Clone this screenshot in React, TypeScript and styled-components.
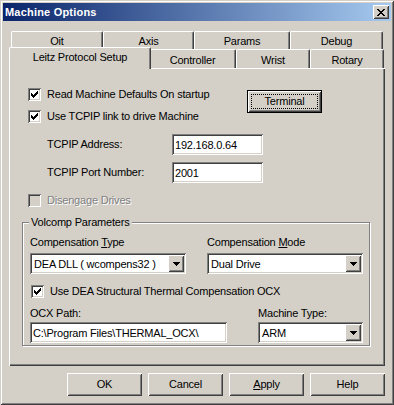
import React from 'react'
import styled, { createGlobalStyle } from 'styled-components'

const GlobalStyle = createGlobalStyle`
  html, body {
    margin: 0;
    padding: 0;
    background: #d4d0c8;
  }
  body {
    font-family: 'Liberation Sans', Arial, sans-serif;
    font-size: 11px;
    letter-spacing: -0.2px;
    color: #000;
  }
`

const raised = `
  box-shadow: inset 1px 1px #fff, inset -1px -1px #404040, inset 2px 2px #d4d0c8, inset -2px -2px #808080;
`

const sunken = `
  box-shadow: inset 1px 1px #808080, inset -1px -1px #fff, inset 2px 2px #404040, inset -2px -2px #d4d0c8;
`

const CHECK_PIXELS = [
  '......X',
  '.....XX',
  'X...XXX',
  'XX.XXX.',
  'XXXXX..',
  '.XXX...',
  '..X....',
]

const CLOSE_PIXELS = [
  'XX....XX',
  '.XX..XX.',
  '..XXXX..',
  '...XX...',
  '..XXXX..',
  '.XX..XX.',
  'XX....XX',
]

const PixelGlyph: React.FC<{ rows: string[], color?: string }> = ({ rows, color = '#000' }) => (
  <svg width={rows[0].length} height={rows.length} shapeRendering="crispEdges">
    {rows.map((row, y) =>
      row.split('').map((c, x) =>
        c === 'X' ? <rect key={`${x}-${y}`} x={x} y={y} width={1} height={1} fill={color} /> : null
      )
    )}
  </svg>
)

const Checkbox: React.FC<{ checked?: boolean, disabled?: boolean, label: React.ReactNode }> = ({
  checked,
  disabled,
  label,
}) => (
  <StyledCheckRow>
    <StyledCheckBox $disabled={disabled}>
      {checked && <PixelGlyph rows={CHECK_PIXELS} />}
    </StyledCheckBox>
    <StyledLabel $disabled={disabled}>{label}</StyledLabel>
  </StyledCheckRow>
)

const Combo: React.FC<{ value: string, width: number }> = ({ value, width }) => (
  <StyledCombo $width={width}>
    <StyledComboText>{value}</StyledComboText>
    <StyledDropButton>
      <svg width="7" height="4" shapeRendering="crispEdges">
        <path d="M0 0h7v1h-1v1h-1v1h-1v1h-1v-1h-1v-1h-1v-1h-1z" fill="#000" />
      </svg>
    </StyledDropButton>
  </StyledCombo>
)

const backTabs = [
  { label: 'Oit', width: 92 },
  { label: 'Axis', width: 91 },
  { label: 'Params', width: 96 },
  { label: 'Debug', width: 93 },
]

const frontTabs = [
  { label: 'Leitz Protocol Setup', width: 138, selected: true },
  { label: 'Controller', width: 87 },
  { label: 'Wrist', width: 74 },
  { label: 'Rotary', width: 74 },
]

const App: React.FC = () => {
  return (
    <>
      <GlobalStyle />
      <StyledWindow>
        <StyledTitleBar>
          <StyledTitle>Machine Options</StyledTitle>
          <StyledCloseButton>
            <PixelGlyph rows={CLOSE_PIXELS} />
          </StyledCloseButton>
        </StyledTitleBar>

        <StyledBody>
          <StyledTabStrip>
            <StyledTabRow $height={18}>
              {backTabs.map(t => (
                <StyledTab key={t.label} $width={t.width}>{t.label}</StyledTab>
              ))}
            </StyledTabRow>
            <StyledTabRow $height={19}>
              {frontTabs.map(t => (
                <StyledTab key={t.label} $width={t.width} $selected={t.selected}>{t.label}</StyledTab>
              ))}
            </StyledTabRow>
          </StyledTabStrip>

          <StyledPanel>
            <StyledTopGrid>
              <Checkbox checked label="Read Machine Defaults On startup" />
              <StyledTerminalButton>
                <StyledFocusRect>Terminal</StyledFocusRect>
              </StyledTerminalButton>
              <Checkbox checked label="Use TCPIP link to drive Machine" />
            </StyledTopGrid>

            <StyledFieldGrid>
              <StyledLabel>TCPIP Address:</StyledLabel>
              <StyledTextField>192.168.0.64</StyledTextField>
              <StyledLabel>TCPIP Port Number:</StyledLabel>
              <StyledTextField>2001</StyledTextField>
            </StyledFieldGrid>

            <StyledDisengage>
              <Checkbox disabled label="Disengage Drives" />
            </StyledDisengage>

            <StyledGroupBox>
              <StyledLegend>Volcomp Parameters</StyledLegend>
              <StyledCompGrid>
                <StyledLabel>Compensation <u>T</u>ype</StyledLabel>
                <StyledLabel>Compensation <u>M</u>ode</StyledLabel>
                <Combo value="DEA DLL ( wcompens32 )" width={156} />
                <Combo value="Dual Drive" width={156} />
              </StyledCompGrid>

              <StyledThermalRow>
                <Checkbox checked label="Use DEA Structural Thermal Compensation OCX" />
              </StyledThermalRow>

              <StyledOcxGrid>
                <StyledLabel>OCX Path:</StyledLabel>
                <StyledLabel>Machine Type:</StyledLabel>
                <StyledTextField>C:\Program Files\THERMAL_OCX\</StyledTextField>
                <Combo value="ARM" width={105} />
              </StyledOcxGrid>
            </StyledGroupBox>
          </StyledPanel>

          <StyledButtonBar>
            <StyledButton>OK</StyledButton>
            <StyledButton>Cancel</StyledButton>
            <StyledButton><u>A</u>pply</StyledButton>
            <StyledButton>Help</StyledButton>
          </StyledButtonBar>
        </StyledBody>
      </StyledWindow>
    </>
  )
}

const StyledWindow = styled.div`
  width: 394px;
  height: 405px;
  box-sizing: border-box;
  padding: 3px;
  background: #d4d0c8;
  box-shadow: inset 1px 1px #d4d0c8, inset -1px -1px #404040, inset 2px 2px #fff, inset -2px -2px #808080;
  display: flex;
  flex-direction: column;
`

const StyledTitleBar = styled.div`
  height: 18px;
  display: flex;
  align-items: center;
  padding: 0 2px;
  background: linear-gradient(to right, #0a246a, #a6caf0);
`

const StyledTitle = styled.div`
  color: #fff;
  font-weight: 700;
  font-size: 11px;
  line-height: 13px;
  letter-spacing: 0.2px;
`

const StyledCloseButton = styled.div`
  margin-left: auto;
  width: 16px;
  height: 14px;
  box-sizing: border-box;
  background: #d4d0c8;
  ${raised}
  display: flex;
  align-items: center;
  justify-content: center;
  padding-right: 1px;
`

const StyledBody = styled.div`
  padding: 10px 6px 0 6px;
  display: flex;
  flex-direction: column;
`

const StyledTabStrip = styled.div`
  display: flex;
  flex-direction: column;
`

const StyledTabRow = styled.div<{ $height: number }>`
  display: flex;
  align-items: flex-end;
  height: ${p => p.$height}px;
  padding-left: 2px;
`

const StyledTab = styled.div<{ $width: number, $selected?: boolean }>`
  box-sizing: border-box;
  width: ${p => p.$selected ? p.$width + 4 : p.$width}px;
  ${p => p.$selected ? 'height: 22px; margin: 0 -2px -1px -2px; padding-bottom: 3px;' : 'height: 100%; padding-top: 2px;'}
  position: relative;
  z-index: ${p => p.$selected ? 2 : 0};
  background: #d4d0c8;
  border-top: 1px solid #fff;
  border-left: 1px solid #fff;
  border-right: 1px solid #404040;
  border-radius: 2px 2px 0 0;
  box-shadow: inset -1px 0 #808080;
  display: flex;
  align-items: center;
  justify-content: center;
  line-height: 13px;
  white-space: nowrap;
`

const StyledPanel = styled.div`
  height: 298px;
  box-sizing: border-box;
  padding: 20px 15px 0 13px;
  background: #d4d0c8;
  box-shadow: inset 1px 1px #fff, inset -1px -1px #404040, inset -2px -2px #808080;
  display: flex;
  flex-direction: column;
`

const StyledTopGrid = styled.div`
  display: grid;
  grid-template-columns: 219px 75px;
  grid-template-rows: 13px 13px;
  row-gap: 9px;
  margin-left: 6px;
`

const StyledCheckRow = styled.div`
  display: flex;
  align-items: center;
  gap: 6px;
  height: 13px;
`

const StyledCheckBox = styled.div<{ $disabled?: boolean }>`
  width: 13px;
  height: 13px;
  flex: none;
  box-sizing: border-box;
  padding: 3px;
  background: ${p => p.$disabled ? '#d4d0c8' : '#fff'};
  ${sunken}
  display: flex;
`

const StyledLabel = styled.span<{ $disabled?: boolean }>`
  line-height: 13px;
  white-space: nowrap;
  color: ${p => p.$disabled ? '#808080' : '#000'};
  text-shadow: ${p => p.$disabled ? '1px 1px 0 #fff' : 'none'};
`

const StyledButton = styled.div`
  width: 75px;
  height: 23px;
  box-sizing: border-box;
  background: #d4d0c8;
  ${raised}
  display: flex;
  align-items: center;
  justify-content: center;
  line-height: 13px;
`

const StyledTerminalButton = styled(StyledButton)`
  grid-column: 2;
  grid-row: 1 / span 2;
  margin-top: 2px;
  border: 1px solid #000;
  padding: 3px;
`

const StyledFocusRect = styled.div`
  flex: 1;
  align-self: stretch;
  border: 1px dotted #000;
  display: flex;
  align-items: center;
  justify-content: center;
`

const StyledFieldGrid = styled.div`
  display: grid;
  grid-template-columns: 125px 91px;
  grid-auto-rows: 21px;
  row-gap: 7px;
  align-items: center;
  margin: 11px 0 0 25px;
`

const StyledTextField = styled.div`
  height: 21px;
  box-sizing: border-box;
  background: #fff;
  ${sunken}
  padding: 0 3px;
  display: flex;
  align-items: center;
  white-space: nowrap;
  overflow: hidden;
`

const StyledDisengage = styled.div`
  margin: 11px 0 0 6px;
`

const StyledGroupBox = styled.div`
  position: relative;
  margin-top: 15px;
  border: 1px solid #808080;
  box-shadow: 1px 1px 0 #fff, inset 1px 1px 0 #fff;
  padding: 13px 7px 2px 7px;
`

const StyledLegend = styled.span`
  position: absolute;
  top: -7px;
  left: 6px;
  padding: 0 2px;
  background: #d4d0c8;
  line-height: 13px;
`

const StyledCompGrid = styled.div`
  display: grid;
  grid-template-columns: 156px 156px;
  grid-template-rows: 13px 21px;
  column-gap: 21px;
  row-gap: 4px;
`

const StyledCombo = styled.div<{ $width: number }>`
  width: ${p => p.$width}px;
  height: 21px;
  box-sizing: border-box;
  background: #fff;
  ${sunken}
  padding: 2px;
  display: flex;
  align-items: center;
`

const StyledComboText = styled.span`
  flex: 1;
  padding-left: 2px;
  white-space: nowrap;
  overflow: hidden;
`

const StyledDropButton = styled.div`
  width: 16px;
  height: 17px;
  box-sizing: border-box;
  background: #d4d0c8;
  ${raised}
  display: flex;
  align-items: center;
  justify-content: center;
`

const StyledThermalRow = styled.div`
  margin: 11px 0 0 1px;
`

const StyledOcxGrid = styled.div`
  display: grid;
  grid-template-columns: 197px 105px;
  grid-template-rows: 13px 21px;
  column-gap: 31px;
  row-gap: 2px;
  margin-top: 9px;
`

const StyledButtonBar = styled.div`
  display: flex;
  justify-content: flex-end;
  gap: 6px;
  margin-top: 7px;
`

export default App
